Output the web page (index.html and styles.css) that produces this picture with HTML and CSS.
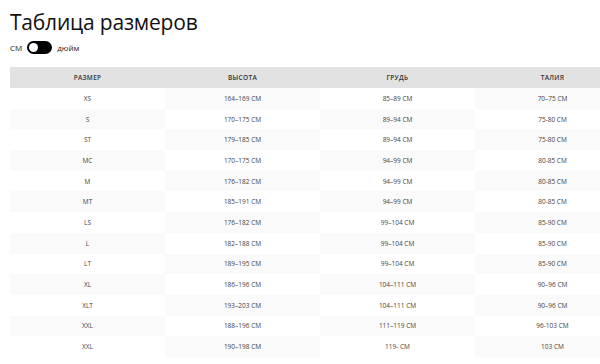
FILE: index.html
```html
<!DOCTYPE html>
<html lang="ru">
<head>
<meta charset="utf-8">
<link rel="stylesheet" href="styles.css">
</head>
<body>
<div class="page">
  <h1 class="title">Таблица размеров</h1>
  <div class="units">
    <span class="unit">СМ</span>
    <span class="switch"><span class="knob"></span></span>
    <span class="unit">дюйм</span>
  </div>
  <div class="table-wrap">
    <table class="sizes">
      <thead>
        <tr><th>РАЗМЕР</th><th>ВЫСОТА</th><th>ГРУДЬ</th><th>ТАЛИЯ</th></tr>
      </thead>
      <tbody>
        <tr><td>XS</td><td>164–169 СМ</td><td>85–89 СМ</td><td>70–75 СМ</td></tr>
        <tr><td>S</td><td>170–175 СМ</td><td>89–94 СМ</td><td>75-80 СМ</td></tr>
        <tr><td>ST</td><td>179–185 СМ</td><td>89–94 СМ</td><td>75-80 СМ</td></tr>
        <tr><td>MC</td><td>170–175 СМ</td><td>94–99 СМ</td><td>80-85 СМ</td></tr>
        <tr><td>M</td><td>176–182 СМ</td><td>94–99 СМ</td><td>80-85 СМ</td></tr>
        <tr><td>MT</td><td>185–191 СМ</td><td>94–99 СМ</td><td>80-85 СМ</td></tr>
        <tr><td>LS</td><td>176–182 СМ</td><td>99–104 СМ</td><td>85-90 СМ</td></tr>
        <tr><td>L</td><td>182–188 СМ</td><td>99–104 СМ</td><td>85-90 СМ</td></tr>
        <tr><td>LT</td><td>189–195 СМ</td><td>99–104 СМ</td><td>85-90 СМ</td></tr>
        <tr><td>XL</td><td>186–196 СМ</td><td>104–111 СМ</td><td>90–96 СМ</td></tr>
        <tr><td>XLT</td><td>193–203 СМ</td><td>104–111 СМ</td><td>90–96 СМ</td></tr>
        <tr><td>XXL</td><td>188–196 СМ</td><td>111–119 СМ</td><td>96-103 СМ</td></tr>
        <tr><td>XXL</td><td>190–198 СМ</td><td>119- СМ</td><td>103 СМ</td></tr>
      </tbody>
    </table>
  </div>
</div>
</body>
</html>
```

FILE: styles.css
```css
html, body {
  margin: 0;
  padding: 0;
  background: #fff;
}
body {
  font-family: "Open Sans", "Noto Sans", sans-serif;
  color: #333;
}
.page {
  padding: 8px 0 0 10px;
  overflow: hidden;
}
.title {
  margin: 0;
  font-family: "Open Sans", sans-serif;
  font-weight: 400;
  font-size: 21px;
  line-height: 28px;
  color: #111;
  letter-spacing: -0.2px;
}
.units {
  display: flex;
  align-items: center;
  gap: 5px;
  margin-top: 4px;
  height: 14px;
}
.unit {
  font-size: 8px;
  color: #222;
}
.switch {
  display: inline-flex;
  align-items: center;
  width: 25px;
  height: 13px;
  border-radius: 7px;
  background: #000;
  padding: 0 2px;
  box-sizing: border-box;
}
.knob {
  width: 9px;
  height: 9px;
  border-radius: 50%;
  background: #fff;
}
.table-wrap {
  margin-top: 13px;
  width: 590px;
  overflow: hidden;
}
.sizes {
  width: 620px;
  table-layout: fixed;
  border-collapse: collapse;
}
.sizes th, .sizes td {
  text-align: center;
  padding: 0;
  font-size: 6.5px;
  color: #444;
}
.sizes th {
  background: #e2e2e2;
  height: 21px;
  font-weight: 600;
  letter-spacing: 0.3px;
  color: #333;
}
.sizes td {
  height: 20.7px;
}
.sizes tbody tr:nth-child(odd) td:nth-child(even),
.sizes tbody tr:nth-child(even) td:nth-child(odd) {
  background: #fafafa;
}
```
